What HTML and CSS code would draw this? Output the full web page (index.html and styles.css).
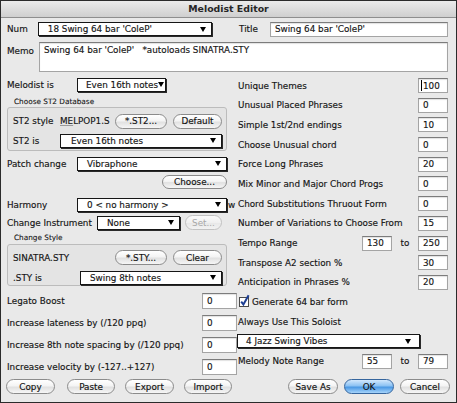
FILE: index.html
```html
<!DOCTYPE html>
<html>
<head>
<meta charset="utf-8">
<link rel="stylesheet" href="styles.css">
</head>
<body>
<div class="window">
  <div class="titlebar">Melodist Editor</div>
  <div class="content">
    <div class="row-top">
      <span class="lbl w-num">Num</span>
      <div class="popup p-num"><span>18 Swing 64 bar 'ColeP'</span><i class="arrow"></i></div>
      <span class="lbl w-title">Title</span>
      <div class="field f-title">Swing 64 bar 'ColeP'</div>
    </div>
    <div class="row-memo">
      <span class="lbl w-memo">Memo</span>
      <div class="field memo">Swing 64 bar 'ColeP' &nbsp;&nbsp;*autoloads SINATRA.STY</div>
    </div>

    <div class="main">
      <div class="left">
        <div class="lrow r-mel"><span class="lbl l70">Melodist is</span><div class="popup p-mel"><span>Even 16th notes</span><i class="arrow"></i></div></div>
        <div class="glabel g1l">Choose ST2 Database</div>
        <div class="group g1">
          <div class="grow gr-a"><span class="lbl l47">ST2 style</span><span class="fname"><span class="ul">ME</span>LPOP1.S</span><div class="btn b-st2">*.ST2...</div><div class="btn b-def">Default</div></div>
          <div class="grow gr-b"><span class="lbl l47">ST2 is</span><div class="popup p-st2"><span>Even 16th notes</span><i class="arrow"></i></div></div>
        </div>
        <div class="lrow r-patch"><span class="lbl l70">Patch change</span><div class="popup p-wide"><span>Vibraphone</span><i class="arrow"></i></div></div>
        <div class="lrow r-choose"><div class="btn b-choose">Choose...</div></div>
        <div class="lrow r-harm"><span class="lbl l70">Harmony</span><div class="popup p-wide"><span>0 &lt; no harmony &gt;</span><i class="arrow"></i></div><span class="stray">w</span></div>
        <div class="lrow r-inst"><span class="lbl l90">Change Instrument</span><div class="popup p-inst"><span>None</span><i class="arrow"></i></div><div class="btn b-set disabled">Set...</div></div>
        <div class="glabel g2l">Change Style</div>
        <div class="group g2">
          <div class="grow gr-c"><span class="lbl l102">SINATRA.STY</span><div class="btn b-st2">*.STY...</div><div class="btn b-def">Clear</div></div>
          <div class="grow gr-d"><span class="lbl l67">.STY is</span><div class="popup p-sty"><span>Swing 8th notes</span><i class="arrow"></i></div></div>
        </div>
        <div class="lrow nrow r-leg"><span class="lbl grow1">Legato Boost</span><div class="field f-num">0</div></div>
        <div class="lrow nrow"><span class="lbl grow1">Increase lateness by (/120 ppq)</span><div class="field f-num">0</div></div>
        <div class="lrow nrow"><span class="lbl grow1">Increase 8th note spacing by (/120 ppq)</span><div class="field f-num">0</div></div>
        <div class="lrow nrow"><span class="lbl grow1">Increase velocity by (-127..+127)</span><div class="field f-num">0</div></div>
      </div>

      <div class="right">
        <div class="rrow"><span class="rl">Unique Themes</span><div class="field f-r"><i class="caret"></i>100</div></div>
        <div class="rrow"><span class="rl">Unusual Placed Phrases</span><div class="field f-r">0</div></div>
        <div class="rrow"><span class="rl">Simple 1st/2nd endings</span><div class="field f-r">10</div></div>
        <div class="rrow"><span class="rl">Choose Unusual chord</span><div class="field f-r">0</div></div>
        <div class="rrow"><span class="rl">Force Long Phrases</span><div class="field f-r">20</div></div>
        <div class="rrow"><span class="rl">Mix Minor and Major Chord Progs</span><div class="field f-r">0</div></div>
        <div class="rrow"><span class="rl">Chord Substitutions Thruout Form</span><div class="field f-r">0</div></div>
        <div class="rrow"><span class="rl">Number of Variations to Choose From</span><div class="field f-r">15</div></div>
        <div class="rrow"><span class="rl">Tempo Range</span><div class="field f-r">130</div><span class="to">to</span><div class="field f-r">250</div></div>
        <div class="rrow"><span class="rl">Transpose A2 section %</span><div class="field f-r">30</div></div>
        <div class="rrow"><span class="rl">Anticipation in Phrases %</span><div class="field f-r">20</div></div>
        <div class="rrow r-check">
          <svg class="check" width="12" height="13" viewBox="0 0 12 13"><rect x="0.5" y="3.5" width="9" height="9" fill="#fff" stroke="#4a4a4a"/><path d="M2.2 7.6 L4.4 10.4 L9.6 1.2" fill="none" stroke="#1d3f94" stroke-width="2"/></svg>
          <span class="cl">Generate 64 bar form</span>
        </div>
        <div class="rrow"><span class="rl">Always Use This Soloist</span></div>
        <div class="rrow"><div class="popup p-solo"><span>4 Jazz Swing Vibes</span><i class="arrow"></i></div></div>
        <div class="rrow"><span class="rl">Melody Note Range</span><div class="field f-r">55</div><span class="to">to</span><div class="field f-r">79</div></div>
      </div>
    </div>

    <div class="footer">
      <div class="fgroup fl">
        <div class="btn b-copy">Copy</div>
        <div class="btn b-paste">Paste</div>
        <div class="btn b-export">Export</div>
        <div class="btn b-import">Import</div>
      </div>
      <div class="fgroup fr">
        <div class="btn b-save">Save As</div>
        <div class="btn b-ok">OK</div>
        <div class="btn b-cancel">Cancel</div>
      </div>
    </div>
  </div>
</div>
</body>
</html>
```

FILE: styles.css
```css
html, body {
  margin: 0;
  padding: 0;
  background: #e9e9e9;
}

.window {
  width: 457px;
  height: 403px;
  box-sizing: border-box;
  border: 1px solid #2b2b2b;
  background: #e9e9e9;
  font-family: "DejaVu Sans", "Verdana", sans-serif;
  font-size: 8.8px;
  color: #151515;
  -webkit-text-stroke: 0.15px #151515;
  overflow: hidden;
}

.titlebar {
  height: 16px;
  line-height: 16px;
  text-align: center;
  font-weight: bold;
  font-size: 9.4px;
  color: #262626;
  -webkit-text-stroke: 0;
  background: linear-gradient(#ebebeb, #cfcfcf);
  border-bottom: 1px solid #8e8e8e;
}

.content {
  padding: 3px 8px 0 6px;
}

.lbl {
  white-space: nowrap;
}

/* popup menus */
.popup {
  display: flex;
  align-items: center;
  box-sizing: border-box;
  height: 14px;
  border: 1px solid #161616;
  background: #fff;
  box-shadow: 1px 1px 0 #2a2a2a;
  padding: 0 5px 0 9px;
  white-space: nowrap;
  overflow: hidden;
}
.popup .arrow {
  margin-left: auto;
  width: 0;
  height: 0;
  border-left: 3.5px solid transparent;
  border-right: 3.5px solid transparent;
  border-top: 5px solid #000;
}

/* text fields */
.field {
  display: flex;
  align-items: center;
  box-sizing: border-box;
  height: 15px;
  padding: 0 4px;
  background: #fff;
  border: 1px solid #a4a4a4;
  border-top-color: #7c7c7c;
  box-shadow: inset 0 1px 1px rgba(0, 0, 0, 0.12);
  white-space: nowrap;
}

/* aqua buttons */
.btn {
  display: flex;
  align-items: center;
  justify-content: center;
  box-sizing: border-box;
  height: 15px;
  border: 1px solid #8b8b8b;
  border-radius: 8px;
  background: linear-gradient(#ffffff, #f4f4f4 45%, #e1e1e1 55%, #f6f6f6);
  white-space: nowrap;
  color: #111;
}
.btn.disabled {
  border-color: #c2c2c2;
  color: #a8a8a8;
  -webkit-text-stroke: 0;
  background: linear-gradient(#fafafa, #f0f0f0 50%, #e8e8e8 55%, #f2f2f2);
}
.b-ok {
  border-color: #35659d;
  background: linear-gradient(#d2e8fd, #8cc2f3 45%, #4a98e4 55%, #a6d4fb);
}

/* top rows */
.row-top {
  display: flex;
  align-items: center;
  height: 16px;
}
.w-num { width: 31px; }
.p-num { width: 175px; }
.w-title { width: 31px; margin-left: 27px; }
.f-title { width: 179px; height: 15px; }

.row-memo {
  display: flex;
  margin-top: 5px;
}
.w-memo { width: 32px; padding-top: 4px; }
.memo {
  flex: 1;
  height: 30px;
  align-items: flex-start;
  padding-top: 2px;
}

/* main area */
.main {
  display: grid;
  grid-template-columns: 230px 1fr;
  margin-top: 5px;
}

.left {
  display: flex;
  flex-direction: column;
}
.lrow {
  display: flex;
  align-items: center;
  height: 15px;
}
.l70 { width: 70px; }
.l90 { width: 90px; }
.l47 { width: 47px; }
.l67 { width: 67px; }
.l102 { width: 102px; }
.grow1 { flex: 1; }

.p-mel { width: 89px; padding-left: 8px; }
.p-wide { width: 150px; }
.p-st2 { width: 162px; padding-left: 10px; }
.p-inst { width: 83px; }
.p-sty { width: 142px; }
.stray { margin-left: 1px; }

.glabel {
  font-size: 7.3px;
  height: 10px;
  line-height: 10px;
  padding-left: 7px;
  -webkit-text-stroke: 0.1px #151515;
}
.g1l { margin-top: 5px; }
.g2l { margin-top: 3px; }

.group {
  box-sizing: border-box;
  width: 220px;
  margin-top: 0;
  border: 1px solid #bcbcbc;
  border-radius: 3px;
  background: #e4e4e4;
  padding: 5px 4px 0 5px;
  display: flex;
  flex-direction: column;
}
.g1 { height: 44px; }
.g2 { height: 42px; margin-top: 1px; }
.grow {
  display: flex;
  align-items: center;
  height: 15px;
}
.gr-a { height: 16px; }
.gr-b { margin-top: 4px; }
.gr-d { margin-top: 5px; }

.fname { width: 55px; }
.ul {
  text-decoration: underline;
  text-decoration-color: #9a9a9a;
}
.b-st2 { width: 52px; margin-right: 6px; }
.b-def { width: 49px; }

.r-mel { margin-top: 0; }
.r-patch { margin-top: 5px; }
.r-choose { margin-top: 4px; height: 14px; justify-content: flex-end; padding-right: 10px; }
.b-choose { width: 65px; height: 14px; }
.r-harm { margin-top: 8px; }
.r-inst { margin-top: 3px; }
.b-set { width: 37px; margin-left: 5px; }

.nrow { height: 16px; margin-top: 6px; }
.r-leg { margin-top: 7px; }
.f-num { width: 35px; height: 16px; }

/* right column */
.right {
  display: flex;
  flex-direction: column;
  gap: 4.7px;
  padding-top: 1px;
}
.rrow {
  display: flex;
  align-items: center;
  height: 15px;
}
.rl {
  flex: 1;
  padding-left: 1px;
  white-space: nowrap;
}
.f-r { width: 30px; }
.to {
  width: 26px;
  text-align: center;
}
.caret {
  display: inline-block;
  width: 1px;
  height: 11px;
  background: #000;
  margin-right: 1px;
  margin-left: -2px;
}
.check {
  margin-left: 2px;
  margin-top: -4px;
}
.cl { margin-left: 1px; }
.p-solo { width: 183px; padding-left: 8px; padding-right: 8px; }

/* footer */
.footer {
  display: flex;
  justify-content: space-between;
  margin-top: 4px;
  margin-left: -1px;
  margin-right: -2px;
}
.fgroup {
  display: flex;
}
.b-copy { width: 49px; }
.b-paste { width: 48px; margin-left: 12px; }
.b-export { width: 49px; margin-left: 10px; }
.b-import { width: 48px; margin-left: 10px; }
.b-save { width: 50px; }
.b-ok { width: 50px; margin-left: 6px; }
.b-cancel { width: 50px; margin-left: 6px; }
```
